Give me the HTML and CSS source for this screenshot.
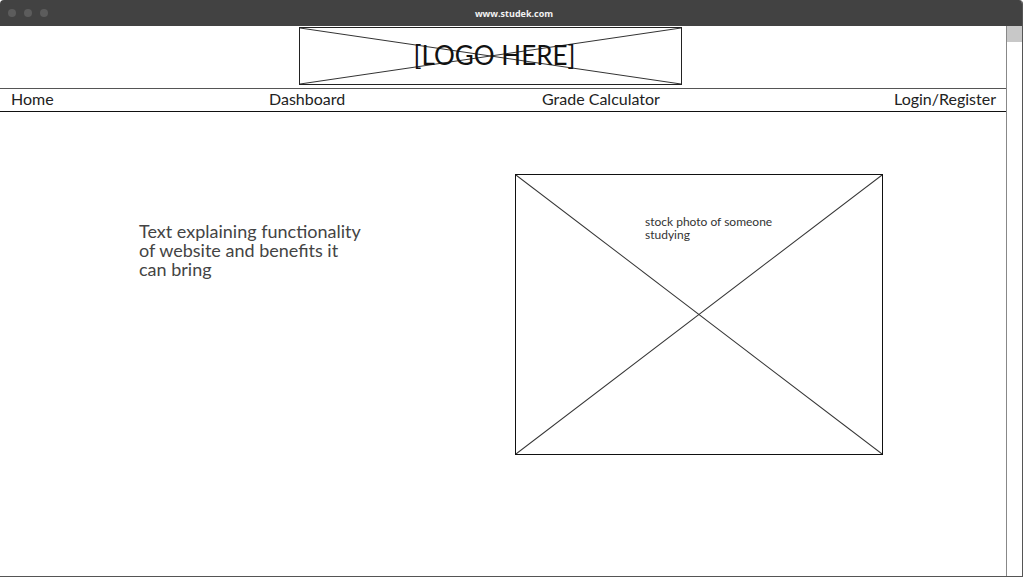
FILE: index.html
```html
<!DOCTYPE html>
<html lang="en">
<head>
    <meta charset="UTF-8">
    <meta name="viewport" content="width=device-width, initial-scale=1.0">
    <title>Studek</title>
    <link rel="stylesheet" href="styles.css">
</head>
<body>
    <div class="window">
        <div class="titlebar">
            <div class="dots">
                <span class="dot"></span>
                <span class="dot"></span>
                <span class="dot"></span>
            </div>
            <div class="url">www.studek.com</div>
            <div></div>
        </div>
        <div class="frame">
            <div class="page">
                <header class="header">
                    <div class="logo">
                        <svg class="cross" viewBox="0 0 100 100" preserveAspectRatio="none">
                            <line x1="0" y1="0" x2="100" y2="100" />
                            <line x1="100" y1="0" x2="0" y2="100" />
                        </svg>
                        <span class="logo-text">[LOGO HERE]</span>
                    </div>
                </header>
                <nav class="nav">
                    <a href="#">Home</a>
                    <a href="#">Dashboard</a>
                    <a href="#">Grade Calculator</a>
                    <a href="#" class="login">Login/Register</a>
                </nav>
                <main class="main">
                    <p class="intro">Text explaining functionality of website and benefits it can bring</p>
                    <div class="photo">
                        <svg class="cross" viewBox="0 0 100 100" preserveAspectRatio="none">
                            <line x1="0" y1="0" x2="100" y2="100" />
                            <line x1="100" y1="0" x2="0" y2="100" />
                        </svg>
                        <span class="photo-text">stock photo of someone studying</span>
                    </div>
                </main>
            </div>
            <div class="scrollbar">
                <div class="thumb"></div>
            </div>
        </div>
    </div>
</body>
</html>
```

FILE: styles.css
```css
body {
    margin: 0;
    background-color: #fff;
    font-family: 'Lato', 'Liberation Sans', sans-serif;
    color: #222;
}

.window {
    width: 1022px;
    height: 576px;
    display: flex;
    flex-direction: column;
    border-right: 1px solid #555;
    border-bottom: 1px solid #555;
    border-radius: 4px 4px 0 0;
    overflow: hidden;
}

.titlebar {
    height: 26px;
    background-color: #424242;
    display: grid;
    grid-template-columns: 1fr auto 1fr;
    align-items: center;
    flex-shrink: 0;
}

.dots {
    display: flex;
    gap: 8px;
    padding-left: 8px;
}

.dot {
    width: 8px;
    height: 8px;
    border-radius: 50%;
    background-color: #5c5c5c;
}

.url {
    color: #f2f2f2;
    font-family: 'Open Sans', sans-serif;
    font-size: 9px;
    font-weight: 700;
    padding-left: 6px;
}

.frame {
    flex: 1;
    display: flex;
    min-height: 0;
}

.page {
    flex: 1;
    display: flex;
    flex-direction: column;
}

.header {
    padding: 1px 0 3px 299px;
}

.logo {
    position: relative;
    width: 381px;
    height: 56px;
    border: 1px solid #222;
    display: flex;
    align-items: center;
    justify-content: center;
}

.cross {
    position: absolute;
    inset: 0;
    width: 100%;
    height: 100%;
}

.cross line {
    stroke: #333;
    stroke-width: 1;
    vector-effect: non-scaling-stroke;
}

.logo-text {
    position: relative;
    font-size: 26px;
    color: #111;
    padding: 0 0 3px 8px;
}

.nav {
    display: grid;
    grid-template-columns: 258px 273px 1fr auto;
    align-items: center;
    height: 19px;
    padding: 0 10px 3px 11px;
    border-top: 1px solid #555;
    border-bottom: 1px solid #111;
}

.nav a {
    color: #222;
    text-decoration: none;
    font-size: 16px;
}

.main {
    display: flex;
    align-items: flex-start;
    padding: 62px 0 0 139px;
}

.intro {
    width: 228px;
    margin: 48px 0 0 0;
    font-size: 18px;
    line-height: 19px;
    color: #444;
}

.photo {
    position: relative;
    width: 366px;
    height: 279px;
    margin-left: 148px;
    border: 1px solid #111;
}

.photo-text {
    position: absolute;
    left: 129px;
    top: 40px;
    width: 140px;
    font-size: 12px;
    line-height: 13px;
    color: #333;
}

.scrollbar {
    width: 15px;
    border-left: 1px solid #888;
}

.thumb {
    height: 16px;
    background-color: #c8c8c8;
}
```
